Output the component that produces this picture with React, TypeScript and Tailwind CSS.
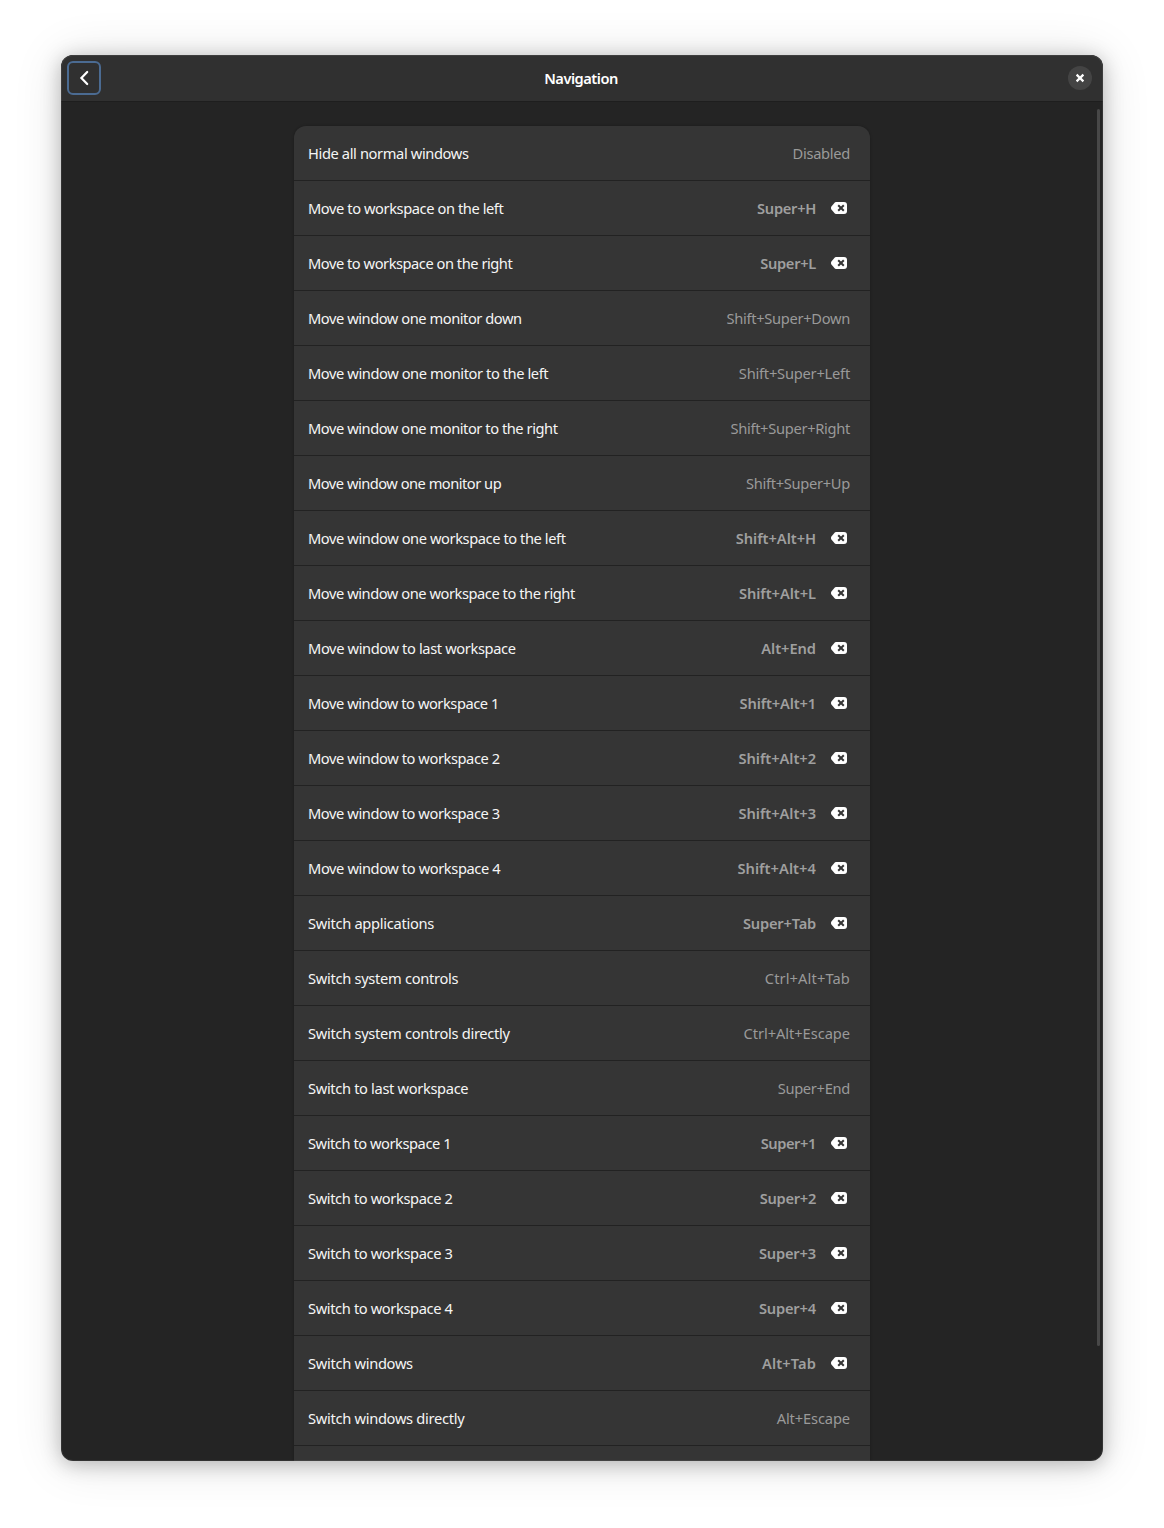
type Shortcut = { label: string; keys: string; custom?: boolean; labelClass?: string; keysClass?: string };

const TIGHT = "tracking-[-0.45px]";
const SNUG = "tracking-[-0.38px]";
const BASE = "tracking-[-0.3px]";
const WIDE = "tracking-[-0.05px]";

const shortcuts: Shortcut[] = [
  { label: "Hide all normal windows", keys: "Disabled", labelClass: SNUG },
  { label: "Move to workspace on the left", keys: "Super+H", custom: true, labelClass: "tracking-[-0.42px]" },
  { label: "Move to workspace on the right", keys: "Super+L", custom: true, labelClass: "tracking-[-0.47px]" },
  { label: "Move window one monitor down", keys: "Shift+Super+Down", labelClass: TIGHT },
  { label: "Move window one monitor to the left", keys: "Shift+Super+Left", labelClass: "tracking-[-0.42px]", keysClass: "tracking-[-0.22px]" },
  { label: "Move window one monitor to the right", keys: "Shift+Super+Right", labelClass: TIGHT },
  { label: "Move window one monitor up", keys: "Shift+Super+Up", labelClass: "tracking-[-0.5px]" },
  { label: "Move window one workspace to the left", keys: "Shift+Alt+H", custom: true, labelClass: "tracking-[-0.42px]", keysClass: WIDE },
  { label: "Move window one workspace to the right", keys: "Shift+Alt+L", custom: true, labelClass: TIGHT, keysClass: WIDE },
  { label: "Move window to last workspace", keys: "Alt+End", custom: true, labelClass: SNUG, keysClass: WIDE },
  { label: "Move window to workspace 1", keys: "Shift+Alt+1", custom: true, labelClass: TIGHT, keysClass: "tracking-[-0.15px]" },
  { label: "Move window to workspace 2", keys: "Shift+Alt+2", custom: true, labelClass: "tracking-[-0.42px]", keysClass: WIDE },
  { label: "Move window to workspace 3", keys: "Shift+Alt+3", custom: true, labelClass: "tracking-[-0.42px]", keysClass: WIDE },
  { label: "Move window to workspace 4", keys: "Shift+Alt+4", custom: true, labelClass: "tracking-[-0.4px]", keysClass: "tracking-[0.05px]" },
  { label: "Switch applications", keys: "Super+Tab", custom: true, keysClass: "tracking-[-0.2px]" },
  { label: "Switch system controls", keys: "Ctrl+Alt+Tab", keysClass: "tracking-[0.12px]" },
  { label: "Switch system controls directly", keys: "Ctrl+Alt+Escape", keysClass: WIDE },
  { label: "Switch to last workspace", keys: "Super+End", labelClass: "tracking-[-0.34px]" },
  { label: "Switch to workspace 1", keys: "Super+1", custom: true, labelClass: TIGHT, keysClass: "tracking-[-0.42px]" },
  { label: "Switch to workspace 2", keys: "Super+2", custom: true, labelClass: SNUG },
  { label: "Switch to workspace 3", keys: "Super+3", custom: true, labelClass: SNUG, keysClass: "tracking-[-0.17px]" },
  { label: "Switch to workspace 4", keys: "Super+4", custom: true, labelClass: SNUG, keysClass: "tracking-[-0.17px]" },
  { label: "Switch windows", keys: "Alt+Tab", custom: true, keysClass: "tracking-[0.1px]" },
  { label: "Switch windows directly", keys: "Alt+Escape", keysClass: "tracking-[-0.12px]" },
];

function ClearIcon() {
  return (
    <svg width="16" height="16" viewBox="0 0 16 16">
      <path
        fill="#fff"
        d="M5.5 2C4.5 2 4 2.4 3.4 3L.6 6.2C-.2 7.2-.2 8.8.6 9.8L3.4 13c.6.6 1.1 1 2.1 1H13a3 3 0 0 0 3-3V5a3 3 0 0 0-3-3Z"
      />
      <path d="m7.2 5.2 5.6 5.6m0-5.6-5.6 5.6" stroke="#353535" strokeWidth="2" />
    </svg>
  );
}

function Row({ label, keys, custom, labelClass = BASE, keysClass = BASE }: Shortcut) {
  return (
    <div className="flex h-[55px] shrink-0 items-center justify-between border-b border-[#222222] pb-px pl-[14px] pr-5">
      <span className={`text-[14.67px] text-[#f5f5f5] ${labelClass}`}>{label}</span>
      {custom ? (
        <div className="flex items-center gap-[15px] pr-[3px]">
          <span className={`text-[14.67px] font-semibold text-[#9f9f9f] ${keysClass}`}>{keys}</span>
          <button aria-label="Reset" className="pt-px">
            <ClearIcon />
          </button>
        </div>
      ) : (
        <span className={`text-[14.67px] text-[#9a9a9a] ${keysClass}`}>{keys}</span>
      )}
    </div>
  );
}

export default function App() {
  return (
    <div className="h-[1528px] w-[1164px] overflow-hidden bg-white pl-[61px] pt-[55px] font-['Noto_Sans',sans-serif]">
      <div className="h-[1406px] w-[1042px] rounded-[12px] shadow-[0_3px_20px_rgba(0,0,0,0.25),0_2px_50px_rgba(0,0,0,0.12)]">
        <div className="relative flex h-full flex-col overflow-hidden rounded-[12px] bg-[#242424]">
          <header className="flex h-[47px] shrink-0 items-center justify-between border-b border-[#1e1e1e] bg-[#303030] pl-[6px] pr-[11px]">
            <button
              aria-label="Back"
              className="flex size-[34px] items-center justify-center rounded-[6px] border-2 border-[#4b6b92]"
            >
              <svg width="16" height="16" viewBox="0 0 16 16" fill="none" stroke="#fff" strokeWidth="2.2">
                <path d="M11.2 2 5.4 8l5.8 6" strokeLinecap="round" />
              </svg>
            </button>
            <h1 className="ml-[-7px] pb-px text-[14.67px] font-semibold tracking-[-0.5px] text-white">Navigation</h1>
            <button
              aria-label="Close"
              className="flex size-6 items-center justify-center rounded-full bg-[#444444]"
            >
              <svg width="16" height="16" viewBox="0 0 16 16" stroke="#fff" strokeWidth="2.2">
                <path d="m4.6 4.6 6.8 6.8m0-6.8-6.8 6.8" />
              </svg>
            </button>
          </header>
          <main className="flex min-h-0 flex-1 justify-center overflow-hidden pt-6">
            <div className="flex h-[1376px] w-[576px] flex-col overflow-hidden rounded-t-[12px] bg-[#353535] shadow-[0_0_2px_1px_rgba(0,0,0,0.12)]">
              {shortcuts.map((s) => (
                <Row key={s.label} {...s} />
              ))}
            </div>
          </main>
          <div className="absolute right-[3px] top-[54px] h-[1237px] w-[3px] rounded-full bg-[#484848]" />
          <div className="pointer-events-none absolute inset-0 rounded-[12px] border border-white/7" />
        </div>
      </div>
    </div>
  );
}
